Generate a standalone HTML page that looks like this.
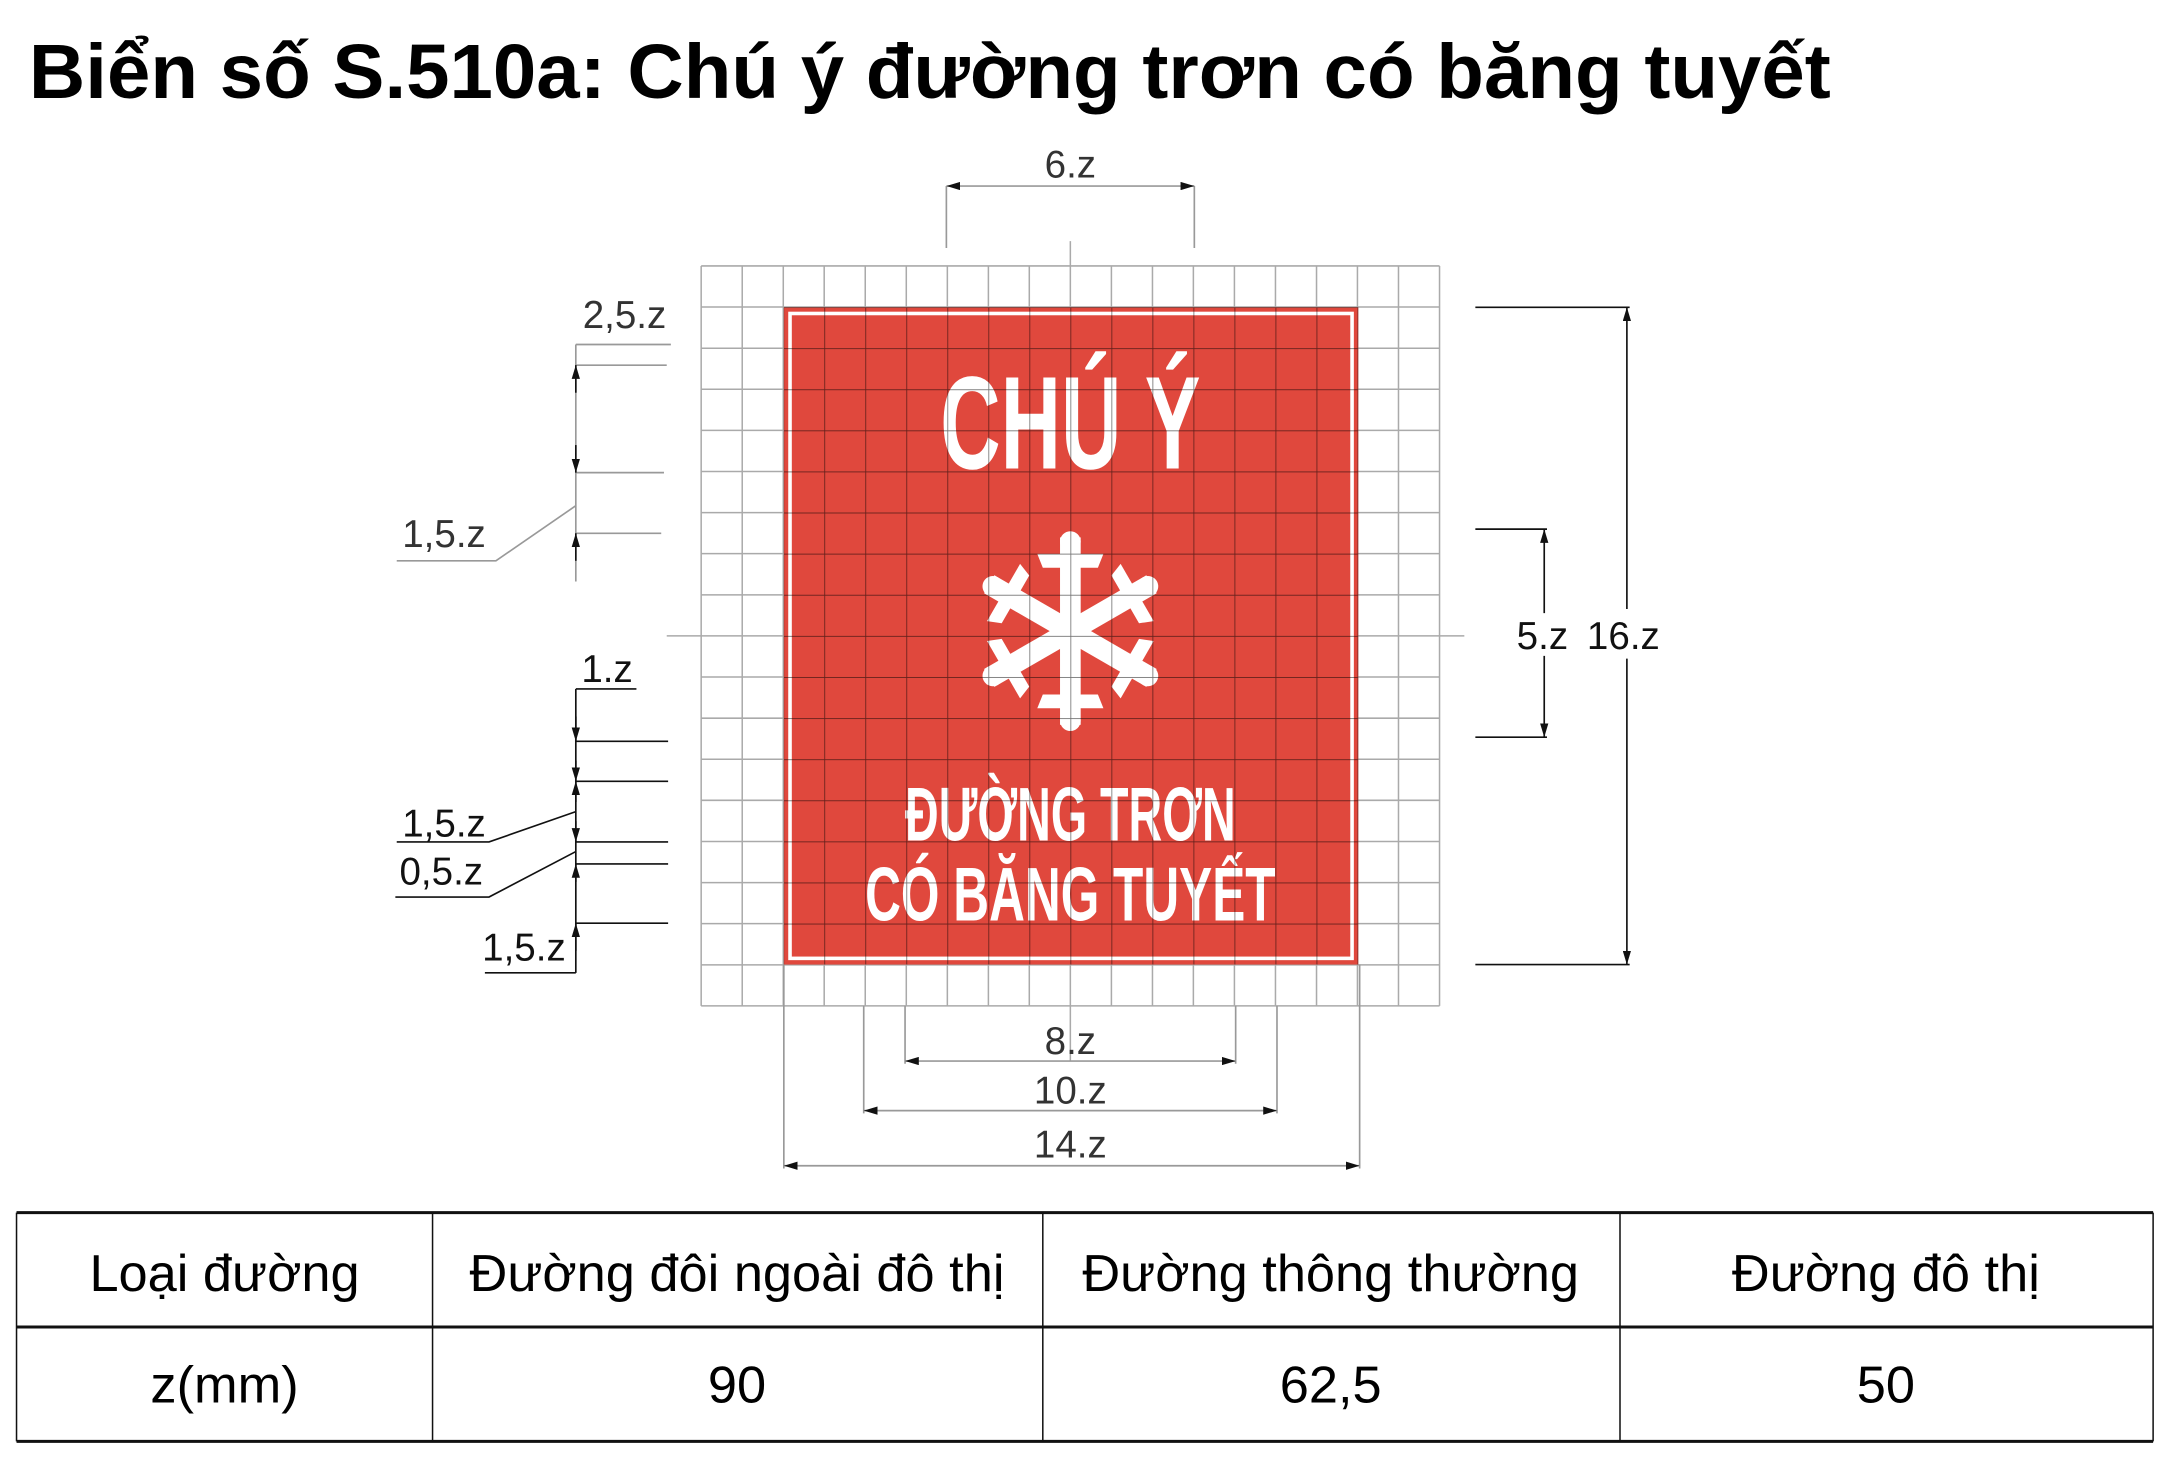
<!DOCTYPE html>
<html><head><meta charset="utf-8"><style>
html,body{margin:0;padding:0;background:#fff;}
svg{display:block;}
</style></head><body>
<svg width="2160" height="1462" viewBox="0 0 1568 1061" preserveAspectRatio="none" xmlns="http://www.w3.org/2000/svg" font-family="'Liberation Sans', sans-serif">
<defs>
<marker id="a" viewBox="0 0 10 6" refX="10" refY="3" markerWidth="10" markerHeight="6" orient="auto-start-reverse" markerUnits="userSpaceOnUse"><path d="M0,0 L10,3 L0,6 z" fill="#111"/></marker>
<pattern id="g" x="509" y="193" width="29.78" height="29.83" patternUnits="userSpaceOnUse"><path d="M0,0 H29.78 M0,0 V29.83" stroke="#000" stroke-width="1.2" fill="none"/></pattern>
</defs>
<text x="21" y="71" font-size="56" font-weight="bold" textLength="1308" lengthAdjust="spacingAndGlyphs">Biển số S.510a: Chú ý đường trơn có băng tuyết</text>

<g stroke="#aaa" stroke-width="1.1">
<path d="M509,193 V730 M538.8,193 V730 M568.6,193 V730 M598.3,193 V730 M628.1,193 V730 M657.9,193 V730 M687.7,193 V730 M717.5,193 V730 M747.2,193 V730 M777,175 V770 M806.8,193 V730 M836.6,193 V730 M866.3,193 V730 M896.1,193 V730 M925.9,193 V730 M955.7,193 V730 M985.4,193 V730 M1015.2,193 V730 M1045,193 V730"/>
<path d="M509,193 H1045 M509,222.8 H1045 M509,252.7 H1045 M509,282.5 H1045 M509,312.3 H1045 M509,342.2 H1045 M509,372 H1045 M509,401.8 H1045 M509,431.7 H1045 M484,461.5 H1063 M509,491.3 H1045 M509,521.2 H1045 M509,551 H1045 M509,580.8 H1045 M509,610.7 H1045 M509,640.5 H1045 M509,670.3 H1045 M509,700.2 H1045 M509,730 H1045"/>
</g>
<rect x="569" y="223" width="417" height="477" fill="#e0483d"/>
<rect x="573.5" y="227.5" width="408" height="468" fill="none" stroke="#fff" stroke-width="2.6"/>
<text x="777" y="340" font-size="96" font-weight="bold" fill="#fff" text-anchor="middle" textLength="189" lengthAdjust="spacingAndGlyphs">CHÚ Ý</text>
<text x="777" y="610" font-size="55" font-weight="bold" fill="#fff" text-anchor="middle" textLength="240" lengthAdjust="spacingAndGlyphs">ĐƯỜNG TRƠN</text>
<text x="777" y="668" font-size="55" font-weight="bold" fill="#fff" text-anchor="middle" textLength="298" lengthAdjust="spacingAndGlyphs">CÓ BĂNG TUYẾT</text>
<g transform="translate(777,458)" fill="#fff">
<g id="arm"><rect x="-7.5" y="-68" width="15" height="68"/><path d="M-24,-56 L24,-56 L20,-46 L-20,-46 z"/><circle cx="0" cy="-65" r="7.5"/></g>
<use href="#arm" transform="rotate(60)"/><use href="#arm" transform="rotate(120)"/><use href="#arm" transform="rotate(180)"/><use href="#arm" transform="rotate(240)"/><use href="#arm" transform="rotate(300)"/>
</g>
<rect x="569" y="223" width="417" height="477" fill="url(#g)" opacity="0.55"/>

<g fill="#333" font-size="28">
<text x="777" y="129" text-anchor="middle">6.z</text>
<text x="423" y="238">2,5.z</text>
<text x="292" y="397">1,5.z</text>
<text x="422" y="495" fill="#111">1.z</text>
<text x="292" y="607" fill="#111">1,5.z</text>
<text x="290" y="642" fill="#111">0,5.z</text>
<text x="350" y="697" fill="#111">1,5.z</text>
<text x="1101" y="471" fill="#111">5.z</text>
<text x="1152" y="471" fill="#111">16.z</text>
<text x="777" y="765" text-anchor="middle">8.z</text>
<text x="777" y="801" text-anchor="middle">10.z</text>
<text x="777" y="840" text-anchor="middle">14.z</text>
</g>
<g stroke="#999" stroke-width="1.2" fill="none">
<path d="M687,135 V180 M867,135 V180"/>
<path d="M687,135 H867" marker-start="url(#a)" marker-end="url(#a)"/>
<path d="M418,250 H487 M418,265 H484 M418,343 H482 M418,387 H480 M418,250 V422 M418,367 L360,407 H288"/>
<path d="M657,730 V772 M897,730 V772 M627,730 V808 M927,730 V808 M569,700 V848 M987,700 V848"/>
<path d="M657,770 H897" marker-start="url(#a)" marker-end="url(#a)"/>
<path d="M627,806 H927" marker-start="url(#a)" marker-end="url(#a)"/>
<path d="M569,846 H987" marker-start="url(#a)" marker-end="url(#a)"/>
</g>
<g stroke="#111" stroke-width="1.2" fill="none" marker-end="url(#a)">
<path d="M418,285 V265"/><path d="M418,323 V343"/><path d="M418,407 V387"/>
<path d="M418,520 V538"/><path d="M418,552 V567"/><path d="M418,582 V567"/>
<path d="M418,596 V611"/><path d="M418,640 V627"/><path d="M418,690 V670"/>
<path d="M1181,442 V223"/><path d="M1181,478 V700"/><path d="M1121,445 V384"/><path d="M1121,476 V535"/>
</g>
<g stroke="#111" stroke-width="1.2" fill="none">
<path d="M418,500 H462 M418,500 V706 M418,538 H485 M418,567 H485 M418,611 H485 M418,627 H485 M418,670 H485 M352,706 H418 M418,589 L355,611 H288 M418,618 L355,651 H287"/>
<path d="M1071,223 H1183 M1071,700 H1183 M1071,384 H1123 M1071,535 H1123"/>
</g>

<g stroke="#111" fill="none">
<path d="M12,880 H1563 M12,963 H1563 M12,1046 H1563" stroke-width="2.2"/>
<path d="M12,880 V1046 M314,880 V1046 M757,880 V1046 M1176,880 V1046 M1563,880 V1046" stroke-width="1.1"/>
</g>
<g font-size="38" fill="#000" text-anchor="middle">
<text x="163" y="937">Loại đường</text>
<text x="535" y="937">Đường đôi ngoài đô thị</text>
<text x="966" y="937">Đường thông thường</text>
<text x="1369" y="937">Đường đô thị</text>
<text x="163" y="1018">z(mm)</text>
<text x="535" y="1018">90</text>
<text x="966" y="1018">62,5</text>
<text x="1369" y="1018">50</text>
</g>
</svg>
</body></html>
